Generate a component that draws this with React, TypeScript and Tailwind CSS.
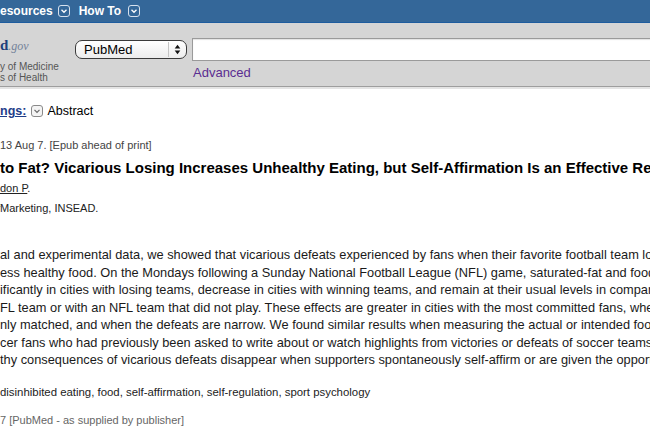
import React from "react";

function Clip({ pre, className = "" }: { pre: React.ReactNode; className?: string }) {
  return <span className={"inline-flex w-0 justify-end whitespace-nowrap " + className}>{pre}</span>;
}

function NavIcon({ className = "" }: { className?: string }) {
  return (
    <svg width="12" height="12" viewBox="0 0 12 12" className={className}>
      <rect x="0.5" y="0.5" width="11" height="11" rx="2.5" fill="none" stroke="#d7e1ee" strokeWidth="1" />
      <path d="M3.5 4.8 L6 7.3 L8.5 4.8" fill="none" stroke="#ffffff" strokeWidth="1.3" />
    </svg>
  );
}

function GrayIcon({ className = "" }: { className?: string }) {
  return (
    <svg width="12" height="12" viewBox="0 0 12 12" className={className}>
      <rect x="0.5" y="0.5" width="11" height="11" rx="2.5" fill="#f4f4f4" stroke="#8a8a8a" strokeWidth="1" />
      <path d="M3.5 4.8 L6 7.3 L8.5 4.8" fill="none" stroke="#666666" strokeWidth="1.2" />
    </svg>
  );
}

const lines: [string, string][] = [
  ["Using archiv", "al and experimental data, we showed that vicarious defeats experienced by fans when their favorite football team loses lead them"],
  ["to consume l", "ess healthy food. On the Mondays following a Sunday National Football League (NFL) game, saturated-fat and food-calorie intake"],
  ["increase sign", "ificantly in cities with losing teams, decrease in cities with winning teams, and remain at their usual levels in comparison cities"],
  ["without an N", "FL team or with an NFL team that did not play. These effects are greater in cities with the most committed fans, when the opponents"],
  ["are eve", "nly matched, and when the defeats are narrow. We found similar results when measuring the actual or intended food consumption of French"],
  ["soc", "cer fans who had previously been asked to write about or watch highlights from victories or defeats of soccer teams. However, these"],
  ["unheal", "thy consequences of vicarious defeats disappear when supporters spontaneously self-affirm or are given the opportunity to do so."],
];

export default function App() {
  return (
    <div className="relative h-[433px] w-[650px] overflow-hidden bg-white font-['Liberation_Sans',Arial,sans-serif] text-[#222]">
      {/* top nav */}
      <div className="flex h-[23px] items-center border-b border-[#1d5c9e] bg-[#346799] text-[12px] font-bold text-white whitespace-nowrap">
        <span>
          <Clip pre="R" />esources
        </span>
        <NavIcon className="ml-[5px] shrink-0" />
        <span className="ml-[9px]">How To</span>
        <NavIcon className="ml-[7px] shrink-0" />
      </div>

      {/* search band */}
      <div className="flex h-[63px] bg-[#d5d5d5] whitespace-nowrap">
        <div className="w-[75px] shrink-0 pt-[14px]">
          <div className="font-['Liberation_Serif',serif] text-[15px] leading-[16px]">
            <span className="font-bold text-[#1e3f7c]">
              <Clip pre="PubMe" />d
            </span>
            <span className="text-[12px] italic text-[#74839a]">.gov</span>
          </div>
          <div className="mt-[7px] text-[10px] leading-[11px] text-[#555]">
            <Clip pre="US National Librar" />y of Medicine
          </div>
          <div className="text-[10px] leading-[11px] text-[#555]">
            <Clip pre="National Institute" />s of Health
          </div>
        </div>
        <div className="shrink-0 pt-[15px]">
          <div className="flex items-start">
            <div className="mt-[2px] flex h-[19px] w-[112px] shrink-0 items-center rounded-[7px] border border-[#3a3a3a] bg-gradient-to-b from-white to-[#ececec] pl-[8px] text-[13px] text-black">
              <span className="flex-1">PubMed</span>
              <span className="h-[15px] w-px bg-[#c4c4c4]" />
              <svg width="7" height="11" viewBox="0 0 7 11" className="mx-[5px]">
                <path d="M3.5 0.8 L6.3 4.4 L0.7 4.4 Z" fill="#111" />
                <path d="M0.7 6.6 L6.3 6.6 L3.5 10.2 Z" fill="#111" />
              </svg>
            </div>
            <div className="ml-[5px] h-[23px] w-[470px] shrink-0 border border-[#9a9a9a] bg-white shadow-[inset_0_1px_1px_rgba(0,0,0,0.12)]" />
          </div>
          <div className="mt-[4px] pl-[118px] text-[13px] leading-[15px] text-[#5a2d91]">Advanced</div>
        </div>
      </div>
      <div className="h-px bg-[#9e9e9e]" />
      <div className="h-[2px] bg-[#e4e4e4]" />

      {/* content */}
      <div className="whitespace-nowrap">
        <div className="mt-[14px] flex h-[16px] items-center">
          <span className="text-[12.5px] font-bold leading-[16px] text-[#1f3e8a] underline">
            <Clip pre="Display Setti" />ngs:
          </span>
          <GrayIcon className="ml-[5px] shrink-0" />
          <span className="ml-[4px] text-[12.5px] leading-[16px] text-black">Abstract</span>
        </div>

        <div className="mt-[19px] text-[11px] leading-[14px] text-[#444]">
          <Clip pre="Psychol Sci. 20" />13 Aug 7. [Epub ahead of print]
        </div>

        <div className="mt-[7px] text-[15px] font-bold leading-[18px] text-black">
          <Clip pre="From Fan " />to Fat? Vicarious Losing Increases Unhealthy Eating, but Self-Affirmation Is an Effective Remedy.
        </div>

        <div className="mt-[4px] text-[11px] leading-[14px] text-[#222]">
          <Clip pre={<span><span className="underline">Cornil Y</span>, <span className="underline">Chan</span></span>} />
          <span className="underline">don P</span>.
        </div>

        <div className="mt-[6px] text-[11px] leading-[14px] text-[#222]">
          <Clip pre="Department of " />Marketing, INSEAD.
        </div>

        <div className="mt-[31px] text-[12.8px] leading-[17.5px] text-[#1a1a1a]">
          {lines.map(([pre, text]) => (
            <div key={pre}>
              <Clip pre={pre} />
              {text}
            </div>
          ))}
        </div>

        <div className="mt-[16px] text-[11.4px] leading-[14px] text-[#222]">
          <Clip pre={<span className="font-bold">KEYWORDS: </span>} />disinhibited eating, food, self-affirmation, self-regulation, sport psychology
        </div>

        <div className="mt-[14px] text-[11px] leading-[14px] text-[#666]">
          <Clip pre="PMID: 2392617" />7 [PubMed - as supplied by publisher]
        </div>
      </div>
    </div>
  );
}
